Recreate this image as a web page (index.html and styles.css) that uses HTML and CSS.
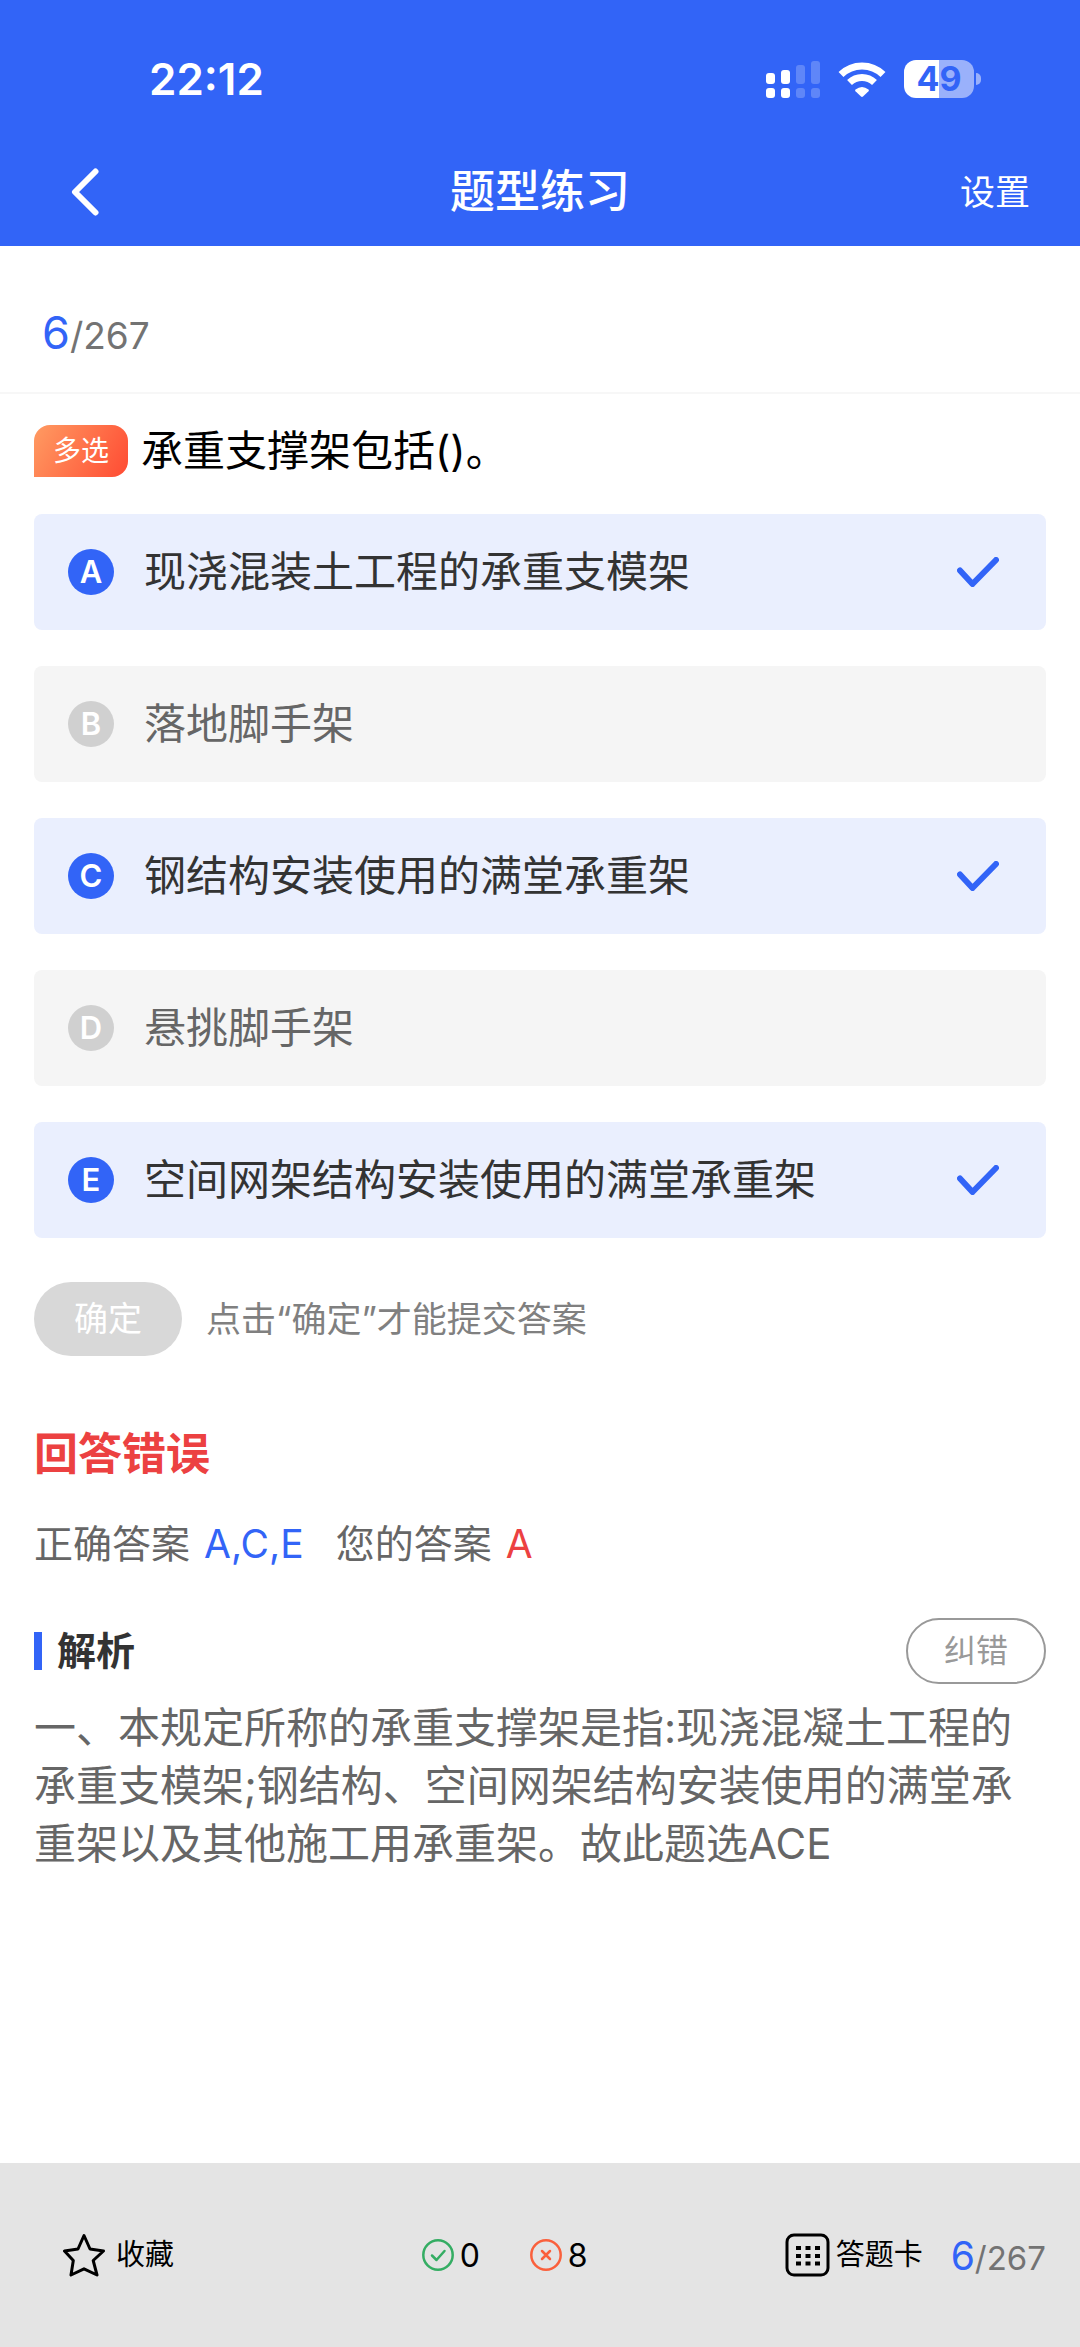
FILE: index.html
```html
<!DOCTYPE html>
<html lang="zh-CN">
<head>
<meta charset="utf-8">
<meta name="viewport" content="width=device-width, initial-scale=1">
<title>题型练习</title>
<link rel="stylesheet" href="styles.css">
</head>
<body>
<div class="page">
  <header class="header">
    <div class="status">
      <span class="status-time">22:12</span>
      <div class="status-icons">
        <svg class="signal" viewBox="0 0 54 38" aria-hidden="true">
          <g fill="#fff"><rect x="0" y="13" width="9" height="11" rx="3"/><rect x="15" y="10" width="9" height="14" rx="3"/><rect x="0" y="28" width="9" height="10" rx="3"/><rect x="15" y="28" width="9" height="10" rx="3"/></g>
          <g fill="#fff" opacity=".22"><rect x="30" y="5" width="9" height="19" rx="3"/><rect x="45" y="1" width="9" height="23" rx="3"/><rect x="30" y="28" width="9" height="10" rx="3"/><rect x="45" y="28" width="9" height="10" rx="3"/></g>
        </svg>
        <svg class="wifi" viewBox="0 0 48 36" aria-hidden="true">
          <g fill="none" stroke="#fff" stroke-width="7"><path d="M3 13.500a30 30 0 0 1 42 0"/><path d="M11.500 21.500a18 18 0 0 1 25 0"/></g>
          <path fill="#fff" d="M17.500 28.500q6.500-5 13 0q.8.800 0 1.700l-5.500 5.300q-1 .8-2 0l-5.500-5.300q-.8-.9 0-1.700z"/>
        </svg>
        <div class="battery"><span class="battery-body">49</span><span class="battery-nub"></span></div>
      </div>
    </div>
    <nav class="nav">
      <button class="nav-back" type="button" aria-label="返回">
        <svg class="icon-back" viewBox="0 0 28 48" aria-hidden="true"><path d="M24.500 3.500L4 24l20.500 20.500" fill="none" stroke="#fff" stroke-width="6" stroke-linecap="round" stroke-linejoin="round"/></svg>
      </button>
      <h1 class="nav-title">题型练习</h1>
      <button class="nav-settings" type="button">设置</button>
    </nav>
  </header>

  <div class="progress"><span class="counter counter-large"><span class="counter-current">6</span>/267</span></div>

  <main class="content">
    <div class="question"><span class="tag">多选</span><h2 class="question-text">承重支撑架包括()。</h2></div>

    <div class="options">
      <label class="option option-selected"><input class="option-input" type="checkbox" name="answer" value="A" checked><span class="option-letter">A</span><span class="option-text">现浇混装土工程的承重支模架</span><svg class="option-check" viewBox="0 0 42 30" aria-hidden="true"><path d="M3 13.500L15.500 27L39 3"/></svg></label>
      <label class="option"><input class="option-input" type="checkbox" name="answer" value="B"><span class="option-letter">B</span><span class="option-text">落地脚手架</span></label>
      <label class="option option-selected"><input class="option-input" type="checkbox" name="answer" value="C" checked><span class="option-letter">C</span><span class="option-text">钢结构安装使用的满堂承重架</span><svg class="option-check" viewBox="0 0 42 30" aria-hidden="true"><path d="M3 13.500L15.500 27L39 3"/></svg></label>
      <label class="option"><input class="option-input" type="checkbox" name="answer" value="D"><span class="option-letter">D</span><span class="option-text">悬挑脚手架</span></label>
      <label class="option option-selected"><input class="option-input" type="checkbox" name="answer" value="E" checked><span class="option-letter">E</span><span class="option-text">空间网架结构安装使用的满堂承重架</span><svg class="option-check" viewBox="0 0 42 30" aria-hidden="true"><path d="M3 13.500L15.500 27L39 3"/></svg></label>
    </div>

    <div class="submit">
      <button class="submit-button" type="button" disabled>确定</button>
      <span class="submit-hint">点击“确定”才能提交答案</span>
    </div>

    <p class="result">回答错误</p>
    <div class="answers">
      <p class="answer">正确答案<span class="answer-value answer-correct">A,C,E</span></p>
      <p class="answer">您的答案<span class="answer-value answer-wrong">A</span></p>
    </div>

    <section class="analysis">
      <div class="analysis-head">
        <h2 class="analysis-title">解析</h2>
        <button class="report" type="button">纠错</button>
      </div>
      <p class="analysis-text">一、本规定所称的承重支撑架是指:现浇混凝土工程的承重支模架;钢结构、空间网架结构安装使用的满堂承重架以及其他施工用承重架。故此题选ACE</p>
    </section>
  </main>

  <footer class="footer">
    <button class="footer-item favorite" type="button">
      <svg class="icon-star" viewBox="0 0 42 44" aria-hidden="true"><path d="M21 2.500l6 13.500 13.500 2-10.300 9.500 3.800 14.500-13-6.200-13 6.200 2.300-14.500L1.500 18l13.500-2z" fill="none" stroke="#000" stroke-width="3" stroke-linejoin="round"/></svg>
      <span>收藏</span>
    </button>
    <div class="scores">
      <span class="score"><svg class="icon-score" viewBox="0 0 32 32" aria-hidden="true"><g fill="none" stroke="#34ad63" stroke-width="2.500" stroke-linecap="round" stroke-linejoin="round"><circle cx="16" cy="16" r="14.700"/><path d="M10 16.500l4.500 4.500 8-9"/></g></svg>0</span>
      <span class="score"><svg class="icon-score" viewBox="0 0 32 32" aria-hidden="true"><g fill="none" stroke="#fa603c" stroke-width="2.500" stroke-linecap="round"><circle cx="16" cy="16" r="14.700"/><path d="M12 12l8 8M20 12l-8 8"/></g></svg>8</span>
    </div>
    <div class="card-group">
      <button class="footer-item card" type="button">
        <svg class="icon-card" viewBox="0 0 44 44" aria-hidden="true"><rect x="1.500" y="2" width="41" height="40" rx="7" fill="none" stroke="#000" stroke-width="3"/><path d="M10.500 15h24M10.500 23h24M10.500 30.500h24" fill="none" stroke="#000" stroke-width="4" stroke-dasharray="5 4.500"/></svg>
        <span>答题卡</span>
      </button>
      <span class="counter counter-small"><span class="counter-current">6</span>/267</span>
    </div>
  </footer>
</div>
</body>
</html>
```
FILE: styles.css
```css
* {
  box-sizing: border-box;
}

body {
  margin: 0;
  background: #fff;
  color: #666;
  font-family: Inter, "Noto Sans CJK SC", sans-serif;
}

button {
  padding: 0;
  border: 0;
  background: none;
  color: inherit;
  font: inherit;
}

h1,
h2,
p {
  margin: 0;
  font-weight: 400;
}

svg {
  display: block;
  flex: none;
}

.page {
  display: flex;
  flex-direction: column;
  min-height: 100vh;
}

/* Header */

.header {
  padding-bottom: 20px;
  background: #3264f7;
  color: #fff;
}

.status {
  display: flex;
  align-items: center;
  justify-content: space-between;
  height: 158px;
  padding: 0 99px 0 149px;
}

.status-time {
  font-size: 44px;
  font-weight: 600;
}

.status-icons {
  display: flex;
  align-items: center;
  gap: 18px;
}

.signal {
  width: 54px;
  height: 38px;
}

.wifi {
  width: 48px;
  height: 36px;
}

.battery {
  display: flex;
  align-items: center;
  gap: 2px;
}

.battery-body {
  width: 70px;
  height: 38px;
  border-radius: 12px;
  background: linear-gradient(90deg, #fff 50%, #9ab1fb 50%);
  color: #3264f7;
  font-size: 34px;
  font-weight: 700;
  line-height: 38px;
  text-align: center;
}

.battery-nub {
  width: 5px;
  height: 12px;
  border-radius: 0 6px 6px 0;
  background: #9ab1fb;
}

.nav {
  display: grid;
  grid-template-columns: 1fr auto 1fr;
  align-items: center;
  height: 68px;
  padding: 0 50px;
}

.nav-back {
  justify-self: start;
  padding-left: 21px;
}

.nav-settings {
  justify-self: end;
  font-size: 35px;
  line-height: 58px;
}

.icon-back {
  width: 28px;
  height: 48px;
}

.nav-title {
  font-size: 45px;
  font-weight: 500;
  line-height: 58px;
}

/* Progress counter */

.progress {
  display: flex;
  align-items: center;
  height: 148px;
  padding: 26px 42px 0;
  border-bottom: 2px solid #f7f7f7;
}

.counter {
  color: #737373;
  white-space: nowrap;
}

.counter-current {
  color: #3264f7;
}

.counter-large {
  font-size: 37px;
}

.counter-large .counter-current {
  font-size: 45px;
}

.counter-small {
  font-size: 33px;
}

.counter-small .counter-current {
  font-size: 39px;
}

/* Question and options */

.content {
  flex: 1;
  padding: 27px 34px 60px;
}

.question {
  display: flex;
  align-items: center;
  gap: 13px;
  min-height: 60px;
}

.tag {
  flex: none;
  width: 94px;
  height: 52px;
  border-radius: 16px 16px 16px 0;
  background: linear-gradient(120deg, #ff9b62, #ff4b33);
  color: #fff;
  font-size: 28px;
  line-height: 52px;
  text-align: center;
}

.question-text {
  color: #000;
  font-size: 42px;
  line-height: 60px;
}

.options {
  display: grid;
  gap: 36px;
  margin-top: 33px;
}

.option {
  position: relative;
  display: flex;
  align-items: center;
  gap: 30px;
  min-height: 116px;
  padding: 0 47px 0 34px;
  border-radius: 8px;
  background: #f5f5f5;
  font-size: 42px;
}

.option-selected {
  background: #eaeffe;
  color: #333;
}

.option-input {
  position: absolute;
  inset: 0;
  margin: 0;
  opacity: 0;
}

.option-letter {
  flex: none;
  width: 46px;
  height: 46px;
  border-radius: 50%;
  background: #d0d0d0;
  color: #fff;
  font-size: 31px;
  font-weight: 600;
  line-height: 46px;
  text-align: center;
}

.option-selected .option-letter {
  background: #3264f7;
}

.option-text {
  flex: 1;
  line-height: 58px;
}

.option-check {
  width: 42px;
  height: 30px;
  fill: none;
  stroke: #3264f7;
  stroke-width: 6;
  stroke-linecap: round;
  stroke-linejoin: round;
}

/* Submit and result */

.submit {
  display: flex;
  align-items: center;
  gap: 24px;
  margin-top: 44px;
}

.submit-button {
  width: 148px;
  height: 74px;
  border-radius: 37px;
  background: #d8d8d8;
  color: #fff;
  font-size: 34px;
  line-height: 74px;
}

.submit-hint {
  color: #808080;
  font-size: 35px;
  line-height: 58px;
}

.result {
  margin-top: 68px;
  color: #ec4141;
  font-size: 44px;
  font-weight: 700;
  line-height: 60px;
}

.answers {
  display: flex;
  gap: 32px;
  margin-top: 30px;
  font-size: 39px;
  line-height: 60px;
}

.answer-value {
  margin-left: 14px;
}

.answer-correct {
  color: #3264f7;
}

.answer-wrong {
  color: #ec4141;
}

/* Analysis */

.analysis {
  margin-top: 44px;
}

.analysis-head {
  display: flex;
  align-items: center;
  justify-content: space-between;
}

.analysis-title {
  padding-left: 15px;
  border-left: 8px solid #3264f7;
  color: #333;
  font-size: 39px;
  font-weight: 700;
  line-height: 38px;
}

.report {
  width: 140px;
  height: 66px;
  border: 2px solid #999;
  border-radius: 33px;
  color: #999;
  font-size: 32px;
  line-height: 60px;
}

.analysis-text {
  margin-top: 15px;
  font-size: 42px;
  line-height: 58px;
}

/* Footer */

.footer {
  display: grid;
  grid-template-columns: 1fr auto auto;
  align-items: center;
  column-gap: 197px;
  height: 184px;
  padding: 0 34px 0 63px;
  background: #e4e4e4;
  color: #000;
}

.footer-item {
  display: flex;
  align-items: center;
  font-size: 29px;
  line-height: 42px;
}

.favorite {
  gap: 11px;
}

.icon-star {
  width: 42px;
  height: 44px;
}

.scores {
  display: flex;
  gap: 50px;
  font-size: 32px;
}

.score {
  display: flex;
  align-items: center;
  gap: 6px;
}

.icon-score {
  width: 32px;
  height: 32px;
}

.card-group {
  display: flex;
  align-items: center;
  gap: 28px;
}

.card {
  gap: 6px;
}

.icon-card {
  width: 45px;
  height: 44px;
}
```
